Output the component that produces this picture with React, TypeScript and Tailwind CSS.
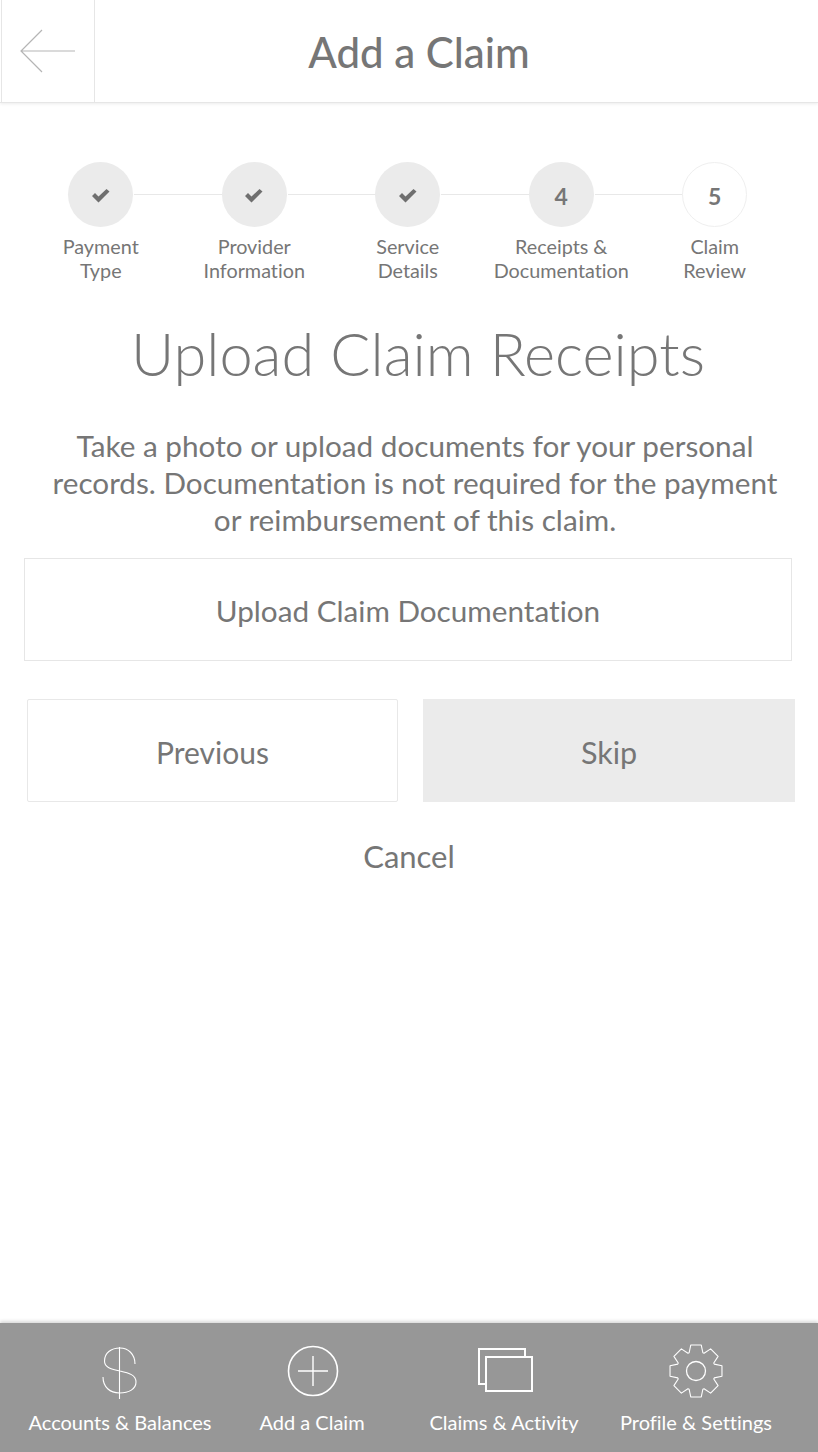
const font = "font-['Lato','Liberation_Sans',sans-serif] [font-variant-ligatures:none]";

const steps = [
  { first: "Payment", second: "Type", mark: "check", filled: true },
  { first: "Provider", second: "Information", mark: "check", filled: true },
  { first: "Service", second: "Details", mark: "check", filled: true },
  { first: "Receipts &", second: "Documentation", mark: "4", filled: true },
  { first: "Claim", second: "Review", mark: "5", filled: false },
];

// 8 tooth gear, drawn around 0,0
const gearPath = () => {
  const pts: string[] = [];
  for (let i = 0; i < 8; i++) {
    const a = (i * Math.PI) / 4 - Math.PI / 2;
    const at = (r: number, d: number) =>
      `${(r * Math.cos(a + d)).toFixed(2)} ${(r * Math.sin(a + d)).toFixed(2)}`;
    pts.push(at(19.5, -0.36), at(26.5, -0.2), at(26.5, 0.2), at(19.5, 0.36));
  }
  return `M${pts.join("L")}Z`;
};

const BackArrow = () => (
  <svg width="58" height="48" viewBox="0 0 58 48" fill="none" stroke="#b5b5b5" strokeWidth="1.2">
    <path d="M22 3 L1 24 L22 45 M1 24 H55" />
  </svg>
);

const Check = () => (
  <svg width="20" height="16" viewBox="0 0 20 16" fill="#6f6f6f">
    <path d="M1 8 L4 5 L7.5 8.5 L15.5 1 L18.5 3.5 L7.5 14.5 Z" />
  </svg>
);

const DollarIcon = () => (
  <svg width="40" height="56" viewBox="0 0 40 56" fill="none" stroke="#fff" strokeWidth="1.1">
    <path d="M35 21 C35 11 28 5 20 5 C11 5 4.5 10 4.5 18 C4.5 25 12 26 20 28 C29 30 36 32 36 39 C36 46 29 50 19.5 50 C10 50 3 44 3 34" />
    <path d="M19.5 4 V56" />
  </svg>
);

const PlusIcon = () => (
  <svg width="52" height="52" viewBox="0 0 52 52" fill="none" stroke="#fff">
    <circle cx="26" cy="26" r="24.5" strokeWidth="1.6" />
    <path d="M11 26 H41 M26 11 V41" strokeWidth="1.4" />
  </svg>
);

const ClaimsIcon = () => (
  <svg width="56" height="46" viewBox="0 0 56 46" fill="none" stroke="#fff" strokeWidth="2">
    <path d="M8 36 H1 V1 H47 V9" />
    <rect x="8" y="9" width="46" height="34" />
  </svg>
);

const GearIcon = () => (
  <svg width="56" height="56" viewBox="-28 -28 56 56" fill="none" stroke="#fff" strokeWidth="1.1">
    <path d={gearPath()} strokeLinejoin="round" />
    <circle r="9.5" strokeWidth="1.3" />
  </svg>
);

const tabs = [
  { label: "Accounts & Balances", icon: <DollarIcon />, iconClass: "" },
  { label: "Add a Claim", icon: <PlusIcon />, iconClass: "pl-[2px]" },
  { label: "Claims & Activity", icon: <ClaimsIcon />, iconClass: "pl-[3px]" },
  { label: "Profile & Settings", icon: <GearIcon />, iconClass: "" },
];

const App = () => {
  return (
    <div className={`${font} relative flex h-[1452px] w-[818px] flex-col overflow-hidden bg-white text-[#767676]`}>
      <header className="flex h-[103px] shrink-0 items-center border-b border-[#e6e6e6] shadow-[0_1px_3px_rgba(0,0,0,0.08)]">
        <div className="ml-px flex h-full w-[94px] items-center border-x border-[#e6e6e6] pl-[18px]">
          <BackArrow />
        </div>
        <h1 className="ml-[-95px] w-full pl-[20px] pt-[2px] text-center text-[42px] font-medium leading-none">Add a Claim</h1>
      </header>

      <div className="ml-[24px] mt-[59px] grid w-[767.5px] grid-cols-5">
        {steps.map((step, i) => (
          <div key={step.first} className="relative flex flex-col items-center">
            {i < 4 && <div className="absolute left-[110px] top-[32px] h-px w-[88px] bg-[#e8e8e8]" />}
            <div
              className={`flex h-[65px] w-[65px] items-center justify-center rounded-full pt-[3px] text-[23px] font-bold ${
                step.filled ? "bg-[#ebebeb]" : "border border-[#efefef] bg-white"
              }`}
            >
              {step.mark === "check" ? <Check /> : step.mark}
            </div>
            <p className="mt-[7px] whitespace-nowrap text-center text-[19.8px] leading-[24px]">
              {step.first}
              <br />
              {step.second}
            </p>
          </div>
        ))}
      </div>

      <h2 className="mt-[35px] pl-[18px] text-center text-[59.5px] font-light leading-[72px]">Upload Claim Receipts</h2>

      <p className="mt-[38px] pl-[12px] text-center text-[29.7px] leading-[37px]">
        Take a photo or upload documents for your personal
        <br />
        records. Documentation is not required for the payment
        <br />
        or reimbursement of this claim.
      </p>

      <button className="mx-[24px] mt-[20px] flex h-[103px] w-[768px] shrink-0 items-center justify-center border border-[#e6e6e6] pt-[3px] text-[29.7px]">
        Upload Claim Documentation
      </button>

      <div className="mt-[38px] flex gap-[25px] pl-[27px]">
        <button className="flex h-[103px] w-[371px] items-center justify-center rounded-[2px] border border-[#e8e8e8] pt-[3px] text-[30px]">
          Previous
        </button>
        <button className="flex h-[103px] w-[372px] items-center justify-center bg-[#ebebeb] pt-[5px] text-[30.5px]">Skip</button>
      </div>

      <button className="mt-[36px] text-center text-[31px] leading-[37px]">Cancel</button>

      <nav className="mt-auto grid h-[129px] shrink-0 grid-cols-[repeat(4,192px)] bg-[#979797] pl-[24px] text-white shadow-[0_-2px_3px_rgba(0,0,0,0.15)]">
        {tabs.map((tab) => (
          <div key={tab.label} className="flex flex-col items-center">
            <div className={`flex h-[87px] items-center justify-center pt-[8px] ${tab.iconClass}`}>{tab.icon}</div>
            <span className="whitespace-nowrap text-[20px] leading-[24px]">{tab.label}</span>
          </div>
        ))}
      </nav>
    </div>
  );
};

export default App;
